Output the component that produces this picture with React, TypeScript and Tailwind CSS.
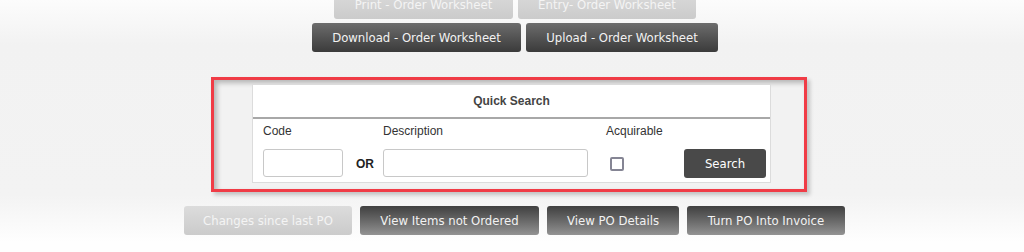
import React from 'react';

const btnFont = "font-['DejaVu_Sans_Condensed','DejaVu_Sans',sans-serif] text-[13px]";
const labelFont = "font-['Liberation_Sans',Arial,sans-serif] text-[12px]";

const GradButton: React.FC<{ label: string; width: string; tone: 'dark' | 'darkUp' | 'light' }> = ({ label, width, tone }) => {
    const tones = {
        dark: 'bg-gradient-to-b from-[#6d6d6d] to-[#3b3b3b] text-[#f2f2f2]',
        darkUp: 'bg-gradient-to-b from-[#404040] to-[#939393] text-[#f2f2f2]',
        light: 'bg-gradient-to-b from-[#dcdcdc] to-[#cbcbcb] text-[#f4f4f4]',
    };
    return (
        <button className={`${width} h-[29px] rounded-[3px] flex items-center justify-center whitespace-nowrap ${btnFont} ${tones[tone]}`}>
            {label}
        </button>
    );
};

const QuickSearch: React.FC = () => {
    return (
        <div className="w-[519px] bg-white border border-[#dcdcdc]">
            <div className={`h-[32px] flex items-center justify-center font-bold text-[#444] ${labelFont}`}>Quick Search</div>
            <div className="h-[2px] bg-[#a8a8a8]" />
            <div className="pl-[10px] pr-[5px] pb-[4px] grid grid-cols-[80px_40px_205px_96px_82px]">
                <div className={`h-[30px] pt-[5px] leading-[14px] text-[#333] ${labelFont}`}>Code</div>
                <div />
                <div className={`h-[30px] pt-[5px] leading-[14px] text-[#333] ${labelFont}`}>Description</div>
                <div className={`h-[30px] pt-[5px] pl-[18px] leading-[14px] text-[#333] ${labelFont}`}>Acquirable</div>
                <div />

                <div className="h-[29px] flex items-start">
                    <input type="text" className="w-[80px] h-[28px] border border-[#c8c8c8] rounded-[3px] bg-white outline-none" />
                </div>
                <div className={`h-[29px] pl-[13px] flex items-center font-bold text-[#222] ${labelFont}`}>OR</div>
                <div className="h-[29px] flex items-start">
                    <input type="text" className="w-[205px] h-[28px] border border-[#c8c8c8] rounded-[3px] bg-white outline-none" />
                </div>
                <div className="h-[29px] pl-[22px] flex items-center">
                    <input type="checkbox" className="appearance-none w-[14px] h-[14px] border-2 border-[#858594] rounded-[2px] bg-white" />
                </div>
                <button className={`h-[29px] w-[82px] rounded-[3px] bg-[#494949] text-white ${btnFont}`}>Search</button>
            </div>
        </div>
    );
};

const App: React.FC = () => {
    return (
        <div className="w-full h-[252px] overflow-hidden flex flex-col items-center bg-[linear-gradient(to_bottom,#fcfcfc_0px,#f2f2f2_45px,#f3f3f3_195px,#fefefe_242px)]">
            <div className="-mt-[10px] ml-[6px] flex gap-[5px]">
                <GradButton label="Print - Order Worksheet" width="w-[179px]" tone="light" />
                <GradButton label="Entry- Order Worksheet" width="w-[178px]" tone="light" />
            </div>
            <div className="mt-[4px] ml-[6px] flex gap-[5px]">
                <GradButton label="Download - Order Worksheet" width="w-[209px]" tone="dark" />
                <GradButton label="Upload - Order Worksheet" width="w-[192px]" tone="dark" />
            </div>
            <div className="mt-[25px] mr-[6px] border-[3px] border-[#f03c46] bg-[#f2f2f2] pl-[38px] pr-[33px] pt-[4px] pb-[6px] shadow-[inset_3px_3px_5px_rgba(0,0,0,0.25),3px_3px_4px_rgba(0,0,0,0.2)]">
                <QuickSearch />
            </div>
            <div className="mt-[14px] ml-[5px] flex gap-[8px]">
                <GradButton label="Changes since last PO" width="w-[168px]" tone="light" />
                <GradButton label="View Items not Ordered" width="w-[179px]" tone="darkUp" />
                <GradButton label="View PO Details" width="w-[132px]" tone="darkUp" />
                <GradButton label="Turn PO Into Invoice" width="w-[158px]" tone="darkUp" />
            </div>
        </div>
    );
};

export default App;
